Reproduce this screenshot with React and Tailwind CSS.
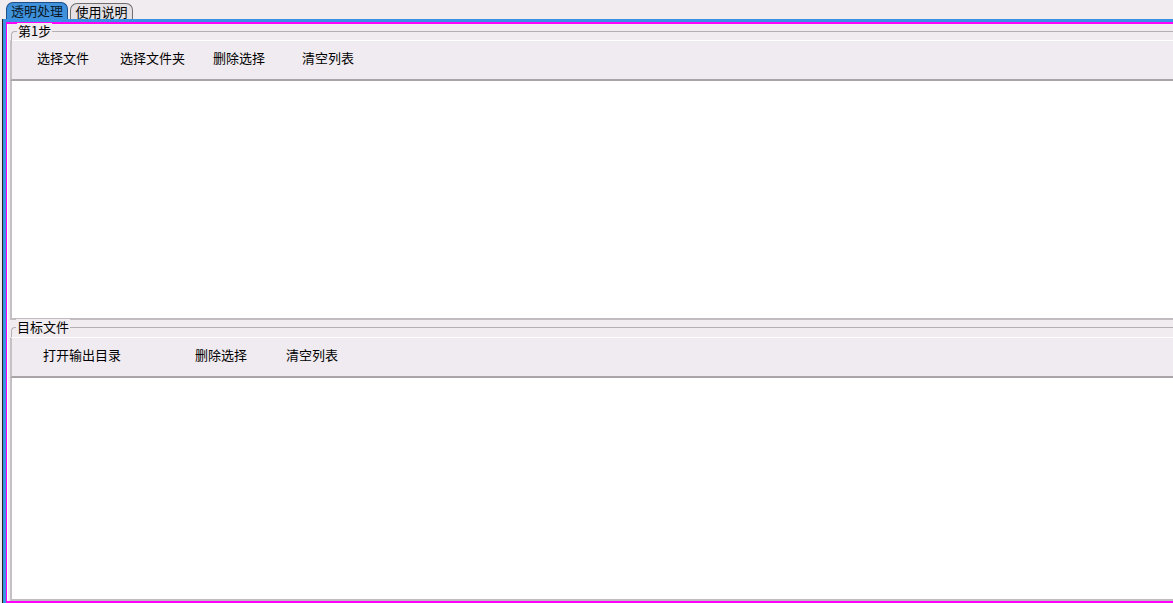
export default function App() {
  const font = { fontFamily: '"Noto Sans CJK SC", "Noto Sans", sans-serif' }
  return (
    <div className="w-[1173px] h-[603px] overflow-hidden bg-[#f0ecf0] flex flex-col text-[13px] text-black" style={font}>
      {/* tabs */}
      <div className="h-[19px] flex items-end pl-[6px] gap-[2px]">
        <div className="h-[17px] w-[62px] rounded-t-[7px] border border-b-0 border-[#1e4f86] bg-[#3f91dc] flex items-center justify-center leading-none text-[#0a1a2a] pb-px">透明处理</div>
        <div className="h-[16px] w-[63px] rounded-t-[7px] border border-b-0 border-[#6f6f6f] bg-[#e4e0e4] flex items-center justify-center leading-none pb-px">使用说明</div>
      </div>

      {/* panel frame */}
      <div className="flex-1 flex pl-[2px]">
        <div className="flex-1 flex border-l border-[#202020]">
          <div className="flex-1 flex border-l-[3px] border-t-[3px] border-[#3a92e4]">
            <div className="flex-1 flex flex-col border-l border-t-2 border-b-2 border-[#ff00ff]">
              <div className="flex-1 flex flex-col border-l border-white pl-[2px]">
                <Group title="第1步" headH="h-[16px]" labelX="ml-[7px]" labelY="-mt-[1px]" listH="h-[239px]">
                  <Btn ml="ml-[25px]">选择文件</Btn>
                  <Btn ml="ml-[31px]">选择文件夹</Btn>
                  <Btn ml="ml-[28px]">删除选择</Btn>
                  <Btn ml="ml-[37px]">清空列表</Btn>
                </Group>
                <Group title="目标文件" headH="h-[17px]" labelX="ml-[6px]" labelY="-mt-[1px]" listH="flex-1">
                  <Btn ml="ml-[31px]">打开输出目录</Btn>
                  <Btn ml="ml-[74px]">删除选择</Btn>
                  <Btn ml="ml-[39px]">清空列表</Btn>
                </Group>
              </div>
            </div>
          </div>
        </div>
      </div>
    </div>
  )
}

function Group({ title, headH, labelX, labelY, listH, children }) {
  return (
    <div className={listH === 'flex-1' ? 'flex-1 flex flex-col' : 'flex flex-col'}>
      <div className={`${headH} relative`}>
        <div className="absolute left-[1px] right-0 top-[7px] h-[10px] border-t border-l border-[#b4b0b4] rounded-tl-[4px]" />
        <span className={`relative ${labelX} ${labelY} bg-[#f0ecf0] px-px leading-[16px] inline-block align-top`}>{title}</span>
      </div>
      <div className="h-[41px] flex items-center pb-[6px] border-t border-white border-l-2 border-l-[#c4c0c4] border-b-2 border-b-[#a8a4a8] bg-[#f0ebf0]">
        {children}
      </div>
      <div className={`${listH} bg-white border-l-2 border-[#c4c0c4] border-b-2 border-b-[#c0bcc0]`} />
    </div>
  )
}

function Btn({ ml, children }) {
  return <div className={`${ml} shrink-0 whitespace-nowrap leading-none`}>{children}</div>
}
